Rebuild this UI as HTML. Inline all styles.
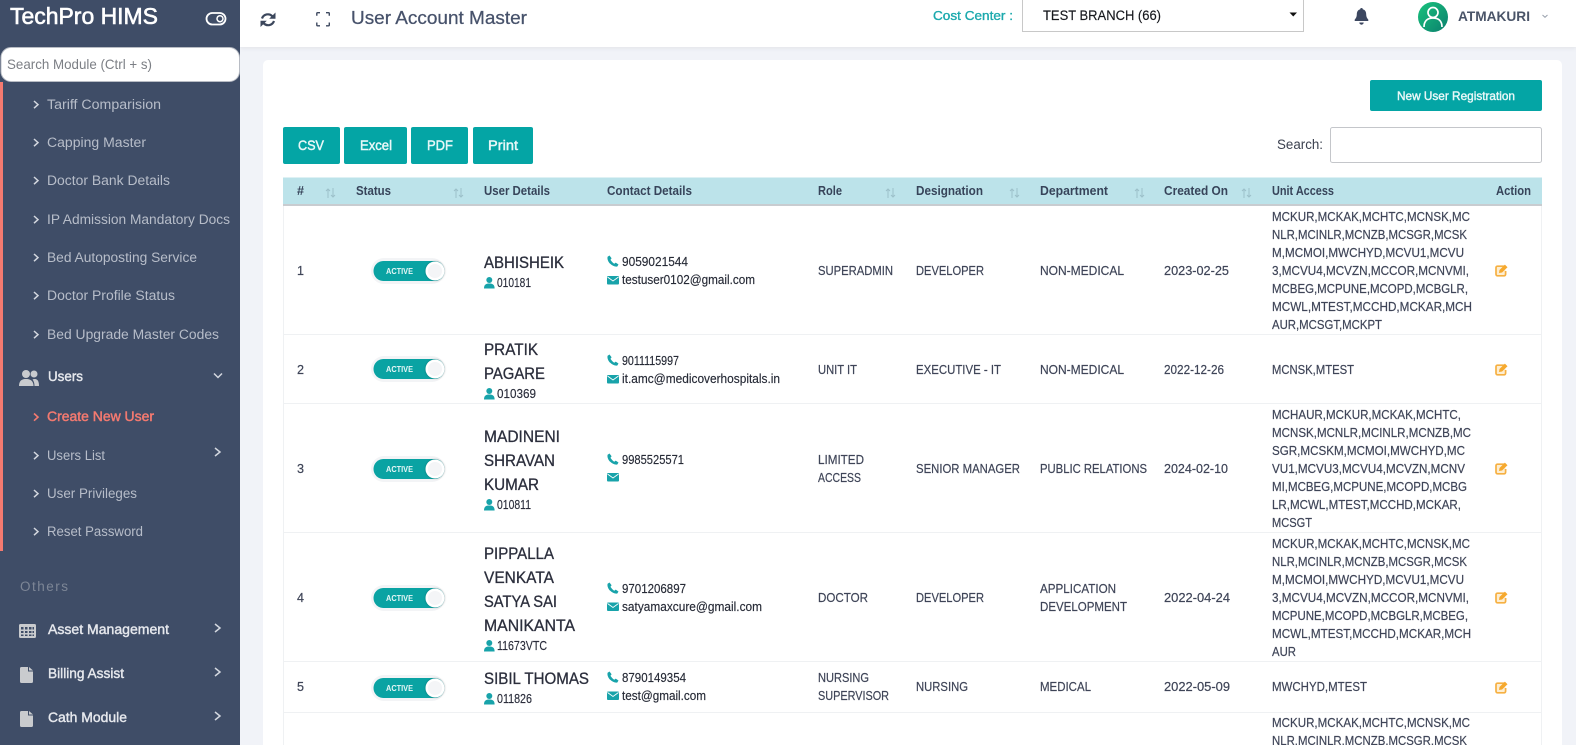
<!DOCTYPE html>
<html lang="en"><head><meta charset="utf-8"><title>User Account Master</title>
<style>
html,body{margin:0;padding:0;width:1576px;height:745px;overflow:hidden;background:#f1f3f8}
svg{display:block}
text{font-family:"Liberation Sans",sans-serif;white-space:pre}
.nav{font-size:13.5px;fill:#b7bdc9}
.navb{font-size:13.5px;fill:#e6e8ed;stroke:#e6e8ed;stroke-width:.4px}
.th{font-size:12.5px;font-weight:700;fill:#37445a}
.td{font-size:12.5px;fill:#3f4558;stroke:#3f4558;stroke-width:.2px}
.name{font-size:16.5px;fill:#2b2e3c;stroke:#2b2e3c;stroke-width:.3px}
.id{font-size:12.5px;fill:#2b2e3c;stroke:#2b2e3c;stroke-width:.15px}
.ct{font-size:12.5px;fill:#262a36;stroke:#262a36;stroke-width:.15px}
.ua{font-size:12.5px;fill:#3f4558;stroke:#3f4558;stroke-width:.2px}
.btn{font-size:13.5px;fill:#e9f8f8;stroke:#e9f8f8;stroke-width:.45px}
.chev{fill:none;stroke:#d3d7df;stroke-width:1.5}
.sort{fill:none;stroke:#9cc0c9;stroke-width:1}
</style></head>
<body>
<svg width="1576" height="745" viewBox="0 0 1576 745" xmlns="http://www.w3.org/2000/svg">
<defs>
<linearGradient id="av" x1="0" y1="0" x2="1" y2="1"><stop offset="0" stop-color="#19c37d"/><stop offset="1" stop-color="#0b7f6d"/></linearGradient>
<filter id="hs" x="-5%" y="-20%" width="110%" height="150%"><feDropShadow dx="0" dy="1" stdDeviation="2" flood-color="#000" flood-opacity=".07"/></filter>
<filter id="ks" x="-30%" y="-30%" width="160%" height="160%"><feDropShadow dx="0" dy="0" stdDeviation="1" flood-color="#000" flood-opacity=".3"/></filter>
<g id="sc"><path class="chev" d="M0 0l4 3.600-4 3.600"/></g>
<g id="sr"><path class="chev" d="M0 0l5 4-5 4"/></g>
<g id="sort"><path class="sort" d="M3 10V1M1 3l2-2 2 2"/><path class="sort" d="M8 0v9M6 7l2 2 2-2" stroke="#7fa5ae"/></g>
<g id="tg">
<rect x="-75" y="-13" width="74" height="26" rx="13" fill="#f3f4f6"/>
<rect x="-72.500" y="-10" width="71" height="20" rx="10" fill="#0aa3a3"/>
<circle cx="-11" cy="0" r="9.500" fill="#fff" filter="url(#ks)"/>
<circle cx="-11" cy="0" r="7" fill="#f4f5f7"/>
<text x="-60" y="3" font-size="8" font-weight="700" fill="#e6f7f7" textLength="27" lengthAdjust="spacingAndGlyphs">ACTIVE</text>
</g>
<path id="ph" fill="#18a3aa" d="M2.500 0L0.600 1.200C0 3.500 1.200 6.300 3.200 8.300 5.200 10.300 8 11.500 10.300 11l1.200-2-2.800-1.900-1.500 1.100C6.300 7.800 4.300 5.800 3.500 4.300L4.600 2.800z"/>
<g id="ml"><rect width="12" height="8.500" rx="1" fill="#18a3aa"/><path d="M0.500 1l5.500 4 5.500-4" fill="none" stroke="#fff" stroke-width=".9"/></g>
<g id="us" fill="#18a3aa"><circle cx="5.300" cy="3" r="3"/><path d="M0 11.500c0-3.800 1.800-5 5.300-5s5.300 1.200 5.300 5z"/></g>
<g id="ed"><path d="M9.500 2.200H2.500A1.500 1.500 0 0 0 1 3.700v6.600A1.500 1.500 0 0 0 2.500 11.800h6.600a1.500 1.500 0 0 0 1.500-1.500V7" fill="#fdeed2" stroke="#f6b042" stroke-width="1.700"/><path d="M4 9l.5-3L9.900.6l2.600 2.600L7.100 8.500z" fill="#f6a92e"/></g>
<g id="doc"><path fill="#c9cbce" d="M0 1.500A1.500 1.500 0 0 1 1.500 0H8v4.500h5V14.500A1.500 1.500 0 0 1 11.500 16h-10A1.500 1.500 0 0 1 0 14.500z"/><path fill="#c9cbce" d="M9 0l4 3.500H9z"/></g>
</defs>

<!-- page -->
<rect width="1576" height="745" fill="#f1f3f8"/>
<rect x="263" y="60" width="1299" height="700" rx="5" fill="#fff"/>

<!-- header -->
<rect x="240" width="1336" height="47" fill="#fff" filter="url(#hs)"/>
<g transform="translate(260 12)" fill="#3c475c">
<path d="M2 6.500A6.200 6.200 0 0 1 12.300 4.200M14 9A6.200 6.200 0 0 1 3.700 11.300" fill="none" stroke="#3c475c" stroke-width="2.200"/>
<path d="M15.500 0.500v6.300H9.200zM0.500 15v-6.300h6.300z"/>
</g>
<path d="M316.800 15.800V13.500q0-.8.800-.8H320M326 12.700h2.500q.8 0 .8.800V15.800M329.300 22.500V25q0 .8-.8.800H326M320 25.800h-2.400q-.8 0-.8-.8v-2.500" fill="none" stroke="#3f4a60" stroke-width="1.400"/>
<text x="351" y="24" font-size="18.500" fill="#47526b" stroke="#47526b" stroke-width=".25" textLength="176" lengthAdjust="spacingAndGlyphs">User Account Master</text>
<text x="933" y="20" font-size="13" fill="#1ba9ad" stroke="#1ba9ad" stroke-width=".35" textLength="80" lengthAdjust="spacingAndGlyphs">Cost Center :</text>
<rect x="1022.500" y="-2" width="281" height="33.500" fill="#fff" stroke="#c8c8c8"/>
<text x="1043" y="20" font-size="13.500" fill="#16181d" stroke="#16181d" stroke-width=".15" textLength="118" lengthAdjust="spacingAndGlyphs">TEST BRANCH (66)</text>
<path d="M1289.500 12.500h7.500l-3.750 4z" fill="#111"/>
<path d="M1361.500 8c.9 0 1.300.6 1.300 1.300 2.600.7 3.400 2.900 3.400 5.200 0 2.300.8 3.600 2.100 5.100v1.400h-13.600v-1.400c1.300-1.500 2.100-2.800 2.100-5.100 0-2.300.8-4.500 3.400-5.200 0-.7.400-1.300 1.300-1.300zM1359.300 22.500h4.400a2.200 2.200 0 0 1-4.400 0z" fill="#3c4760"/>
<circle cx="1433" cy="17" r="15" fill="url(#av)"/>
<g fill="none" stroke="#fff" stroke-width="1.700"><circle cx="1433" cy="12.500" r="5"/><path d="M1424 27c0-6 3.500-9 9-9s9 3 9 9"/></g>
<text x="1458" y="21" font-size="14" font-weight="700" fill="#4a5468" textLength="72" lengthAdjust="spacingAndGlyphs">ATMAKURI</text>
<path d="M1542.500 15l2.500 2.300 2.500-2.300" fill="none" stroke="#9aa1ad" stroke-width="1"/>

<!-- sidebar -->
<rect width="240" height="745" fill="#3f4d67"/>
<rect y="82" width="3" height="469" fill="#f47a70"/>
<text x="10" y="24" font-size="23.500" fill="#fff" stroke="#fff" stroke-width=".6" textLength="148" lengthAdjust="spacingAndGlyphs">TechPro HIMS</text>
<rect x="206.500" y="13" width="19" height="11.500" rx="5.750" fill="none" stroke="#fff" stroke-width="1.800"/>
<circle cx="220" cy="18.700" r="3" fill="none" stroke="#fff" stroke-width="1.500"/>
<rect x="1" y="47.500" width="238.500" height="34" rx="10" fill="#fff" stroke="#b8bcc4"/>
<text x="7" y="69" font-size="14" fill="#7c7f85" textLength="145" lengthAdjust="spacingAndGlyphs">Search Module (Ctrl + s)</text>

<use href="#sc" x="34" y="101"/><text class="nav" x="47" y="109" textLength="114" lengthAdjust="spacingAndGlyphs">Tariff Comparision</text>
<use href="#sc" x="34" y="139"/><text class="nav" x="47" y="147" textLength="99" lengthAdjust="spacingAndGlyphs">Capping Master</text>
<use href="#sc" x="34" y="177"/><text class="nav" x="47" y="185" textLength="123" lengthAdjust="spacingAndGlyphs">Doctor Bank Details</text>
<use href="#sc" x="34" y="216"/><text class="nav" x="47" y="224" textLength="183" lengthAdjust="spacingAndGlyphs">IP Admission Mandatory Docs</text>
<use href="#sc" x="34" y="254"/><text class="nav" x="47" y="262" textLength="150" lengthAdjust="spacingAndGlyphs">Bed Autoposting Service</text>
<use href="#sc" x="34" y="292"/><text class="nav" x="47" y="300" textLength="128" lengthAdjust="spacingAndGlyphs">Doctor Profile Status</text>
<use href="#sc" x="34" y="331"/><text class="nav" x="47" y="339" textLength="172" lengthAdjust="spacingAndGlyphs">Bed Upgrade Master Codes</text>

<g fill="#c9cbce"><circle cx="26" cy="374" r="4"/><circle cx="34" cy="374" r="3.500"/><path d="M19 386c0-5 2.500-7 7-7s7.500 2 7.500 7z"/><path d="M34.500 379c3 0 4.500 2 4.500 7h-4.500c0-3-.8-5-2-6.500.6-.3 1.200-.5 2-.5z"/></g>
<text class="navb" x="48" y="381" textLength="35" lengthAdjust="spacingAndGlyphs">Users</text>
<path class="chev" d="M214 373.500l4 4 4-4"/>

<path d="M34 413.500l4 3.600-4 3.600" fill="none" stroke="#f47a70" stroke-width="1.600"/>
<text x="47" y="421" font-size="13.500" fill="#f47a70" stroke="#f47a70" stroke-width=".45" textLength="107" lengthAdjust="spacingAndGlyphs">Create New User</text>
<use href="#sc" x="34" y="452"/><text class="nav" x="47" y="460" textLength="58" lengthAdjust="spacingAndGlyphs">Users List</text>
<use href="#sr" x="215" y="448"/>
<use href="#sc" x="34" y="490"/><text class="nav" x="47" y="498" textLength="90" lengthAdjust="spacingAndGlyphs">User Privileges</text>
<use href="#sc" x="34" y="528"/><text class="nav" x="47" y="536" textLength="96" lengthAdjust="spacingAndGlyphs">Reset Password</text>

<text x="20" y="591" font-size="13.500" fill="#7d8696" textLength="48" lengthAdjust="spacing">Others</text>

<path fill="#c9cbce" fill-rule="evenodd" d="M20.500 624h14a1.500 1.500 0 0 1 1.500 1.500v11a1.500 1.500 0 0 1-1.500 1.500h-14a1.500 1.500 0 0 1-1.500-1.500v-11a1.500 1.500 0 0 1 1.500-1.500zM21 627v2.500h2.500V627zM25 627v2.500h2.500V627zM29 627v2.500h2.500V627zM32.500 627v2.500H34V627zM21 631v2h2.500v-2zM25 631v2h2.500v-2zM29 631v2h2.500v-2zM32.500 631v2H34v-2zM21 634.500V636h2.500v-1.500zM25 634.500V636h2.500v-1.500zM29 634.500V636h2.500v-1.500zM32.500 634.500V636H34v-1.500z"/>
<text class="navb" x="48" y="634" textLength="121" lengthAdjust="spacingAndGlyphs">Asset Management</text>
<use href="#sr" x="215" y="624"/>
<use href="#doc" x="20" y="667"/>
<text class="navb" x="48" y="678" textLength="76" lengthAdjust="spacingAndGlyphs">Billing Assist</text>
<use href="#sr" x="215" y="668"/>
<use href="#doc" x="20" y="711"/>
<text class="navb" x="48" y="722" textLength="79" lengthAdjust="spacingAndGlyphs">Cath Module</text>
<use href="#sr" x="215" y="712"/>

<!-- card buttons -->
<rect x="1370" y="80" width="172" height="31" rx="2" fill="#04a5a5"/>
<text x="1397" y="100" font-size="12" fill="#e9f8f8" stroke="#e9f8f8" stroke-width=".4" textLength="118" lengthAdjust="spacingAndGlyphs">New User Registration</text>
<rect x="283" y="127" width="57" height="37" rx="2" fill="#04a5a5"/><text class="btn" x="298" y="150" textLength="26" lengthAdjust="spacingAndGlyphs">CSV</text>
<rect x="344" y="127" width="63" height="37" rx="2" fill="#04a5a5"/><text class="btn" x="360" y="150" textLength="32" lengthAdjust="spacingAndGlyphs">Excel</text>
<rect x="411" y="127" width="57" height="37" rx="2" fill="#04a5a5"/><text class="btn" x="427" y="150" textLength="26" lengthAdjust="spacingAndGlyphs">PDF</text>
<rect x="473" y="127" width="60" height="37" rx="2" fill="#04a5a5"/><text class="btn" x="488" y="150" textLength="30" lengthAdjust="spacingAndGlyphs">Print</text>
<text x="1277" y="149" font-size="13.500" fill="#3c4250" textLength="46" lengthAdjust="spacingAndGlyphs">Search:</text>
<rect x="1330.500" y="127.500" width="211" height="35" rx="2" fill="#fff" stroke="#c4c6ca"/>

<!-- table head -->
<rect x="283" y="177.500" width="1259" height="27" fill="#bce3ea"/>
<rect x="283" y="204" width="1259" height="2" fill="#c8ccd0"/>
<text class="th" x="297" y="195" textLength="7" lengthAdjust="spacingAndGlyphs">#</text><use href="#sort" x="325" y="188"/>
<text class="th" x="356" y="195" textLength="35" lengthAdjust="spacingAndGlyphs">Status</text><use href="#sort" x="453" y="188"/>
<text class="th" x="484" y="195" textLength="66" lengthAdjust="spacingAndGlyphs">User Details</text>
<text class="th" x="607" y="195" textLength="85" lengthAdjust="spacingAndGlyphs">Contact Details</text>
<text class="th" x="818" y="195" textLength="24" lengthAdjust="spacingAndGlyphs">Role</text><use href="#sort" x="885" y="188"/>
<text class="th" x="916" y="195" textLength="67" lengthAdjust="spacingAndGlyphs">Designation</text><use href="#sort" x="1009" y="188"/>
<text class="th" x="1040" y="195" textLength="68" lengthAdjust="spacingAndGlyphs">Department</text><use href="#sort" x="1134" y="188"/>
<text class="th" x="1164" y="195" textLength="64" lengthAdjust="spacingAndGlyphs">Created On</text><use href="#sort" x="1241" y="188"/>
<text class="th" x="1272" y="195" textLength="62" lengthAdjust="spacingAndGlyphs">Unit Access</text>
<text class="th" x="1496" y="195" textLength="35" lengthAdjust="spacingAndGlyphs">Action</text>

<!-- table lines -->
<path d="M283.500 206V745M1541.500 206V745M283 334.500H1542M283 403.500H1542M283 532.500H1542M283 661.500H1542M283 712.500H1542" stroke="#eff1f3" fill="none"/>

<!-- row 1 -->
<text class="td" x="297" y="275" font-size="12.500">1</text>
<use href="#tg" x="446" y="271"/>
<text class="name" x="484" y="268" textLength="80" lengthAdjust="spacingAndGlyphs">ABHISHEIK</text>
<use href="#us" x="484" y="277"/><text class="id" x="497" y="287" textLength="34" lengthAdjust="spacingAndGlyphs">010181</text>
<use href="#ph" x="607" y="255.500"/><text class="ct" x="622" y="266" textLength="66" lengthAdjust="spacingAndGlyphs">9059021544</text>
<use href="#ml" x="607" y="276"/><text class="ct" x="622" y="284" textLength="133" lengthAdjust="spacingAndGlyphs">testuser0102@gmail.com</text>
<text class="td" x="818" y="275" textLength="75" lengthAdjust="spacingAndGlyphs">SUPERADMIN</text>
<text class="td" x="916" y="275" textLength="68" lengthAdjust="spacingAndGlyphs">DEVELOPER</text>
<text class="td" x="1040" y="275" textLength="84" lengthAdjust="spacingAndGlyphs">NON-MEDICAL</text>
<text class="td" x="1164" y="275" textLength="65" lengthAdjust="spacingAndGlyphs">2023-02-25</text>
<text class="ua" x="1272" y="221" textLength="198" lengthAdjust="spacingAndGlyphs">MCKUR,MCKAK,MCHTC,MCNSK,MC</text>
<text class="ua" x="1272" y="239" textLength="195" lengthAdjust="spacingAndGlyphs">NLR,MCINLR,MCNZB,MCSGR,MCSK</text>
<text class="ua" x="1272" y="257" textLength="192" lengthAdjust="spacingAndGlyphs">M,MCMOI,MWCHYD,MCVU1,MCVU</text>
<text class="ua" x="1272" y="275" textLength="197" lengthAdjust="spacingAndGlyphs">3,MCVU4,MCVZN,MCCOR,MCNVMI,</text>
<text class="ua" x="1272" y="293" textLength="196" lengthAdjust="spacingAndGlyphs">MCBEG,MCPUNE,MCOPD,MCBGLR,</text>
<text class="ua" x="1272" y="311" textLength="200" lengthAdjust="spacingAndGlyphs">MCWL,MTEST,MCCHD,MCKAR,MCH</text>
<text class="ua" x="1272" y="329" textLength="110" lengthAdjust="spacingAndGlyphs">AUR,MCSGT,MCKPT</text>
<use href="#ed" x="1495" y="264"/>

<!-- row 2 -->
<text class="td" x="297" y="374" textLength="7" lengthAdjust="spacingAndGlyphs">2</text>
<use href="#tg" x="446" y="369"/>
<text class="name" x="484" y="355" textLength="54" lengthAdjust="spacingAndGlyphs">PRATIK</text>
<text class="name" x="484" y="379" textLength="61" lengthAdjust="spacingAndGlyphs">PAGARE</text>
<use href="#us" x="484" y="388"/><text class="id" x="497" y="398" textLength="39" lengthAdjust="spacingAndGlyphs">010369</text>
<use href="#ph" x="607" y="354.500"/><text class="ct" x="622" y="365" textLength="57" lengthAdjust="spacingAndGlyphs">9011115997</text>
<use href="#ml" x="607" y="375"/><text class="ct" x="622" y="383" textLength="158" lengthAdjust="spacingAndGlyphs">it.amc@medicoverhospitals.in</text>
<text class="td" x="818" y="374" textLength="39" lengthAdjust="spacingAndGlyphs">UNIT IT</text>
<text class="td" x="916" y="374" textLength="85" lengthAdjust="spacingAndGlyphs">EXECUTIVE - IT</text>
<text class="td" x="1040" y="374" textLength="84" lengthAdjust="spacingAndGlyphs">NON-MEDICAL</text>
<text class="td" x="1164" y="374" textLength="60" lengthAdjust="spacingAndGlyphs">2022-12-26</text>
<text class="ua" x="1272" y="374" textLength="82" lengthAdjust="spacingAndGlyphs">MCNSK,MTEST</text>
<use href="#ed" x="1495" y="363"/>

<!-- row 3 -->
<text class="td" x="297" y="473" textLength="7" lengthAdjust="spacingAndGlyphs">3</text>
<use href="#tg" x="446" y="469"/>
<text class="name" x="484" y="442" textLength="76" lengthAdjust="spacingAndGlyphs">MADINENI</text>
<text class="name" x="484" y="466" textLength="71" lengthAdjust="spacingAndGlyphs">SHRAVAN</text>
<text class="name" x="484" y="490" textLength="55" lengthAdjust="spacingAndGlyphs">KUMAR</text>
<use href="#us" x="484" y="499"/><text class="id" x="497" y="509" textLength="34" lengthAdjust="spacingAndGlyphs">010811</text>
<use href="#ph" x="607" y="453.500"/><text class="ct" x="622" y="464" textLength="62" lengthAdjust="spacingAndGlyphs">9985525571</text>
<use href="#ml" x="607" y="473"/>
<text class="td" x="818" y="464" textLength="46" lengthAdjust="spacingAndGlyphs">LIMITED</text>
<text class="td" x="818" y="482" textLength="43" lengthAdjust="spacingAndGlyphs">ACCESS</text>
<text class="td" x="916" y="473" textLength="104" lengthAdjust="spacingAndGlyphs">SENIOR MANAGER</text>
<text class="td" x="1040" y="473" textLength="107" lengthAdjust="spacingAndGlyphs">PUBLIC RELATIONS</text>
<text class="td" x="1164" y="473" textLength="64" lengthAdjust="spacingAndGlyphs">2024-02-10</text>
<text class="ua" x="1272" y="419" textLength="189" lengthAdjust="spacingAndGlyphs">MCHAUR,MCKUR,MCKAK,MCHTC,</text>
<text class="ua" x="1272" y="437" textLength="199" lengthAdjust="spacingAndGlyphs">MCNSK,MCNLR,MCINLR,MCNZB,MC</text>
<text class="ua" x="1272" y="455" textLength="193" lengthAdjust="spacingAndGlyphs">SGR,MCSKM,MCMOI,MWCHYD,MC</text>
<text class="ua" x="1272" y="473" textLength="193" lengthAdjust="spacingAndGlyphs">VU1,MCVU3,MCVU4,MCVZN,MCNV</text>
<text class="ua" x="1272" y="491" textLength="195" lengthAdjust="spacingAndGlyphs">MI,MCBEG,MCPUNE,MCOPD,MCBG</text>
<text class="ua" x="1272" y="509" textLength="189" lengthAdjust="spacingAndGlyphs">LR,MCWL,MTEST,MCCHD,MCKAR,</text>
<text class="ua" x="1272" y="527" textLength="40" lengthAdjust="spacingAndGlyphs">MCSGT</text>
<use href="#ed" x="1495" y="462"/>

<!-- row 4 -->
<text class="td" x="297" y="602" textLength="7" lengthAdjust="spacingAndGlyphs">4</text>
<use href="#tg" x="446" y="598"/>
<text class="name" x="484" y="559" textLength="70" lengthAdjust="spacingAndGlyphs">PIPPALLA</text>
<text class="name" x="484" y="583" textLength="70" lengthAdjust="spacingAndGlyphs">VENKATA</text>
<text class="name" x="484" y="607" textLength="73" lengthAdjust="spacingAndGlyphs">SATYA SAI</text>
<text class="name" x="484" y="631" textLength="91" lengthAdjust="spacingAndGlyphs">MANIKANTA</text>
<use href="#us" x="484" y="640"/><text class="id" x="497" y="650" textLength="50" lengthAdjust="spacingAndGlyphs">11673VTC</text>
<use href="#ph" x="607" y="582.500"/><text class="ct" x="622" y="593" textLength="64" lengthAdjust="spacingAndGlyphs">9701206897</text>
<use href="#ml" x="607" y="602.500"/><text class="ct" x="622" y="611" textLength="140" lengthAdjust="spacingAndGlyphs">satyamaxcure@gmail.com</text>
<text class="td" x="818" y="602" textLength="50" lengthAdjust="spacingAndGlyphs">DOCTOR</text>
<text class="td" x="916" y="602" textLength="68" lengthAdjust="spacingAndGlyphs">DEVELOPER</text>
<text class="td" x="1040" y="593" textLength="76" lengthAdjust="spacingAndGlyphs">APPLICATION</text>
<text class="td" x="1040" y="611" textLength="87" lengthAdjust="spacingAndGlyphs">DEVELOPMENT</text>
<text class="td" x="1164" y="602" textLength="66" lengthAdjust="spacingAndGlyphs">2022-04-24</text>
<text class="ua" x="1272" y="548" textLength="198" lengthAdjust="spacingAndGlyphs">MCKUR,MCKAK,MCHTC,MCNSK,MC</text>
<text class="ua" x="1272" y="566" textLength="195" lengthAdjust="spacingAndGlyphs">NLR,MCINLR,MCNZB,MCSGR,MCSK</text>
<text class="ua" x="1272" y="584" textLength="192" lengthAdjust="spacingAndGlyphs">M,MCMOI,MWCHYD,MCVU1,MCVU</text>
<text class="ua" x="1272" y="602" textLength="197" lengthAdjust="spacingAndGlyphs">3,MCVU4,MCVZN,MCCOR,MCNVMI,</text>
<text class="ua" x="1272" y="620" textLength="196" lengthAdjust="spacingAndGlyphs">MCPUNE,MCOPD,MCBGLR,MCBEG,</text>
<text class="ua" x="1272" y="638" textLength="199" lengthAdjust="spacingAndGlyphs">MCWL,MTEST,MCCHD,MCKAR,MCH</text>
<text class="ua" x="1272" y="656" textLength="24" lengthAdjust="spacingAndGlyphs">AUR</text>
<use href="#ed" x="1495" y="591"/>

<!-- row 5 -->
<text class="td" x="297" y="691" textLength="7" lengthAdjust="spacingAndGlyphs">5</text>
<use href="#tg" x="446" y="688"/>
<text class="name" x="484" y="684" textLength="105" lengthAdjust="spacingAndGlyphs">SIBIL THOMAS</text>
<use href="#us" x="484" y="693"/><text class="id" x="497" y="703" textLength="35" lengthAdjust="spacingAndGlyphs">011826</text>
<use href="#ph" x="607" y="671.500"/><text class="ct" x="622" y="682" textLength="64" lengthAdjust="spacingAndGlyphs">8790149354</text>
<use href="#ml" x="607" y="691.500"/><text class="ct" x="622" y="700" textLength="84" lengthAdjust="spacingAndGlyphs">test@gmail.com</text>
<text class="td" x="818" y="682" textLength="51" lengthAdjust="spacingAndGlyphs">NURSING</text>
<text class="td" x="818" y="700" textLength="71" lengthAdjust="spacingAndGlyphs">SUPERVISOR</text>
<text class="td" x="916" y="691" textLength="52" lengthAdjust="spacingAndGlyphs">NURSING</text>
<text class="td" x="1040" y="691" textLength="51" lengthAdjust="spacingAndGlyphs">MEDICAL</text>
<text class="td" x="1164" y="691" textLength="66" lengthAdjust="spacingAndGlyphs">2022-05-09</text>
<text class="ua" x="1272" y="691" textLength="95" lengthAdjust="spacingAndGlyphs">MWCHYD,MTEST</text>
<use href="#ed" x="1495" y="681"/>

<!-- row 6 -->
<text class="ua" x="1272" y="727" textLength="198" lengthAdjust="spacingAndGlyphs">MCKUR,MCKAK,MCHTC,MCNSK,MC</text>
<text class="ua" x="1272" y="745" textLength="195" lengthAdjust="spacingAndGlyphs">NLR,MCINLR,MCNZB,MCSGR,MCSK</text>
</svg>
</body></html>
